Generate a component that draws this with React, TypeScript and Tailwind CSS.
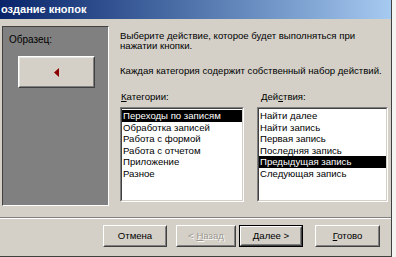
const categories = [
  "Переходы по записям",
  "Обработка записей",
  "Работа с формой",
  "Работа с отчетом",
  "Приложение",
  "Разное",
];

const actions = [
  "Найти далее",
  "Найти запись",
  "Первая запись",
  "Последняя запись",
  "Предыдущая запись",
  "Следующая запись",
];

const ListBox = ({ items, selected, className }: { items: string[]; selected: number; className: string }) => (
  <div
    className={`h-[95px] bg-white border border-t-[#808080] border-l-[#808080] border-r-white border-b-white ${className}`}
  >
    <div className="h-full border border-t-[#404040] border-l-[#404040] border-r-[#d4d0c8] border-b-[#d4d0c8] pt-[1px]">
      {items.map((item, i) => (
        <div
          key={item}
          className={`h-[11.5px] leading-[11.5px] pl-[1px] whitespace-nowrap ${
            i === selected ? "bg-black text-white" : "text-black"
          }`}
        >
          {item}
        </div>
      ))}
    </div>
  </div>
);

const Button = ({ label, disabled, primary, className }: { label: React.ReactNode; disabled?: boolean; primary?: boolean; className?: string }) => (
  <div className={`h-[22px] ${primary ? "border border-black" : ""} ${className ?? ""}`}>
    <div className="h-full border border-t-white border-l-white border-r-[#404040] border-b-[#404040]">
      <div
        className={`h-full flex items-center justify-center border border-t-[#d4d0c8] border-l-[#d4d0c8] border-r-[#808080] border-b-[#808080] ${
          disabled ? "text-[#9a978f] [text-shadow:1px_1px_0_#fff]" : "text-black"
        }`}
      >
        {label}
      </div>
    </div>
  </div>
);

export default function App() {
  return (
    <div className="w-[396px] h-[257px] bg-[#f4f4f2] overflow-hidden text-[9.6px] font-['Liberation_Sans',Arial,sans-serif]">
      <div className="w-[392px] h-[257px] flex flex-col bg-[#d4d0c8] border-r border-r-[#404040] border-b border-b-[#404040]">
        <div className="h-[19px] shrink-0 flex items-center bg-linear-to-r from-[#0a246a] to-[#a6caf0] text-white font-bold text-[11px] pl-[1px]">
          оздание кнопок
        </div>

        <div className="flex h-[188px] pt-[7px]">
          <div className="ml-[2px] w-[107px] h-[180px] bg-[#808080] border border-t-[#404040] border-l-[#404040] border-r-white border-b-white pt-[5px] pl-[6px]">
            <div className="text-black text-[10px]">Образец:</div>
            <div className="mt-[9px] ml-[9px] w-[77px] h-[32px] border border-t-white border-l-white border-r-[#404040] border-b-[#404040]">
              <div className="h-full bg-[#d4d0c8] flex items-center justify-center border border-t-[#e8e6e0] border-l-[#e8e6e0] border-r-[#808080] border-b-[#808080]">
                <svg width="5" height="9" viewBox="0 0 5 9">
                  <path d="M5 0 L0 4.5 L5 9 Z" fill="#8b0000" />
                </svg>
              </div>
            </div>
          </div>

          <div className="ml-[11px] flex flex-col pt-[5px]">
            <p className="leading-[10px] text-black w-[250px]">
              Выберите действие, которое будет выполняться при нажатии кнопки.
            </p>
            <p className="mt-[15px] leading-[10px] text-black whitespace-nowrap">
              Каждая категория содержит собственный набор действий.
            </p>
            <div className="flex mt-[16px] gap-[13px]">
              <div className="flex flex-col">
                <div className="h-[15px] pl-[1px] leading-[10px]">
                  <span className="underline">К</span>атегории:
                </div>
                <ListBox items={categories} selected={0} className="w-[124px]" />
              </div>
              <div className="flex flex-col">
                <div className="h-[15px] pl-[4px] leading-[10px]">
                  Дей<span className="underline">с</span>твия:
                </div>
                <ListBox items={actions} selected={4} className="w-[131px]" />
              </div>
            </div>
          </div>
        </div>

        <div className="h-[2px] border-t border-t-[#808080] border-b border-b-white mt-[10px]" />

        <div className="flex pl-[103px] pt-[6px]">
          <Button label="Отмена" className="w-[64px]" />
          <Button
            label={<span>&lt; <span className="underline">Н</span>азад</span>}
            disabled
            className="w-[60px] ml-[9px]"
          />
          <Button
            label={<span><span className="underline">Д</span>алее &gt;</span>}
            primary
            className="w-[64px] ml-[3px]"
          />
          <Button
            label={<span><span className="underline">Г</span>отово</span>}
            className="w-[65px] ml-[12px]"
          />
        </div>
      </div>
    </div>
  );
}
